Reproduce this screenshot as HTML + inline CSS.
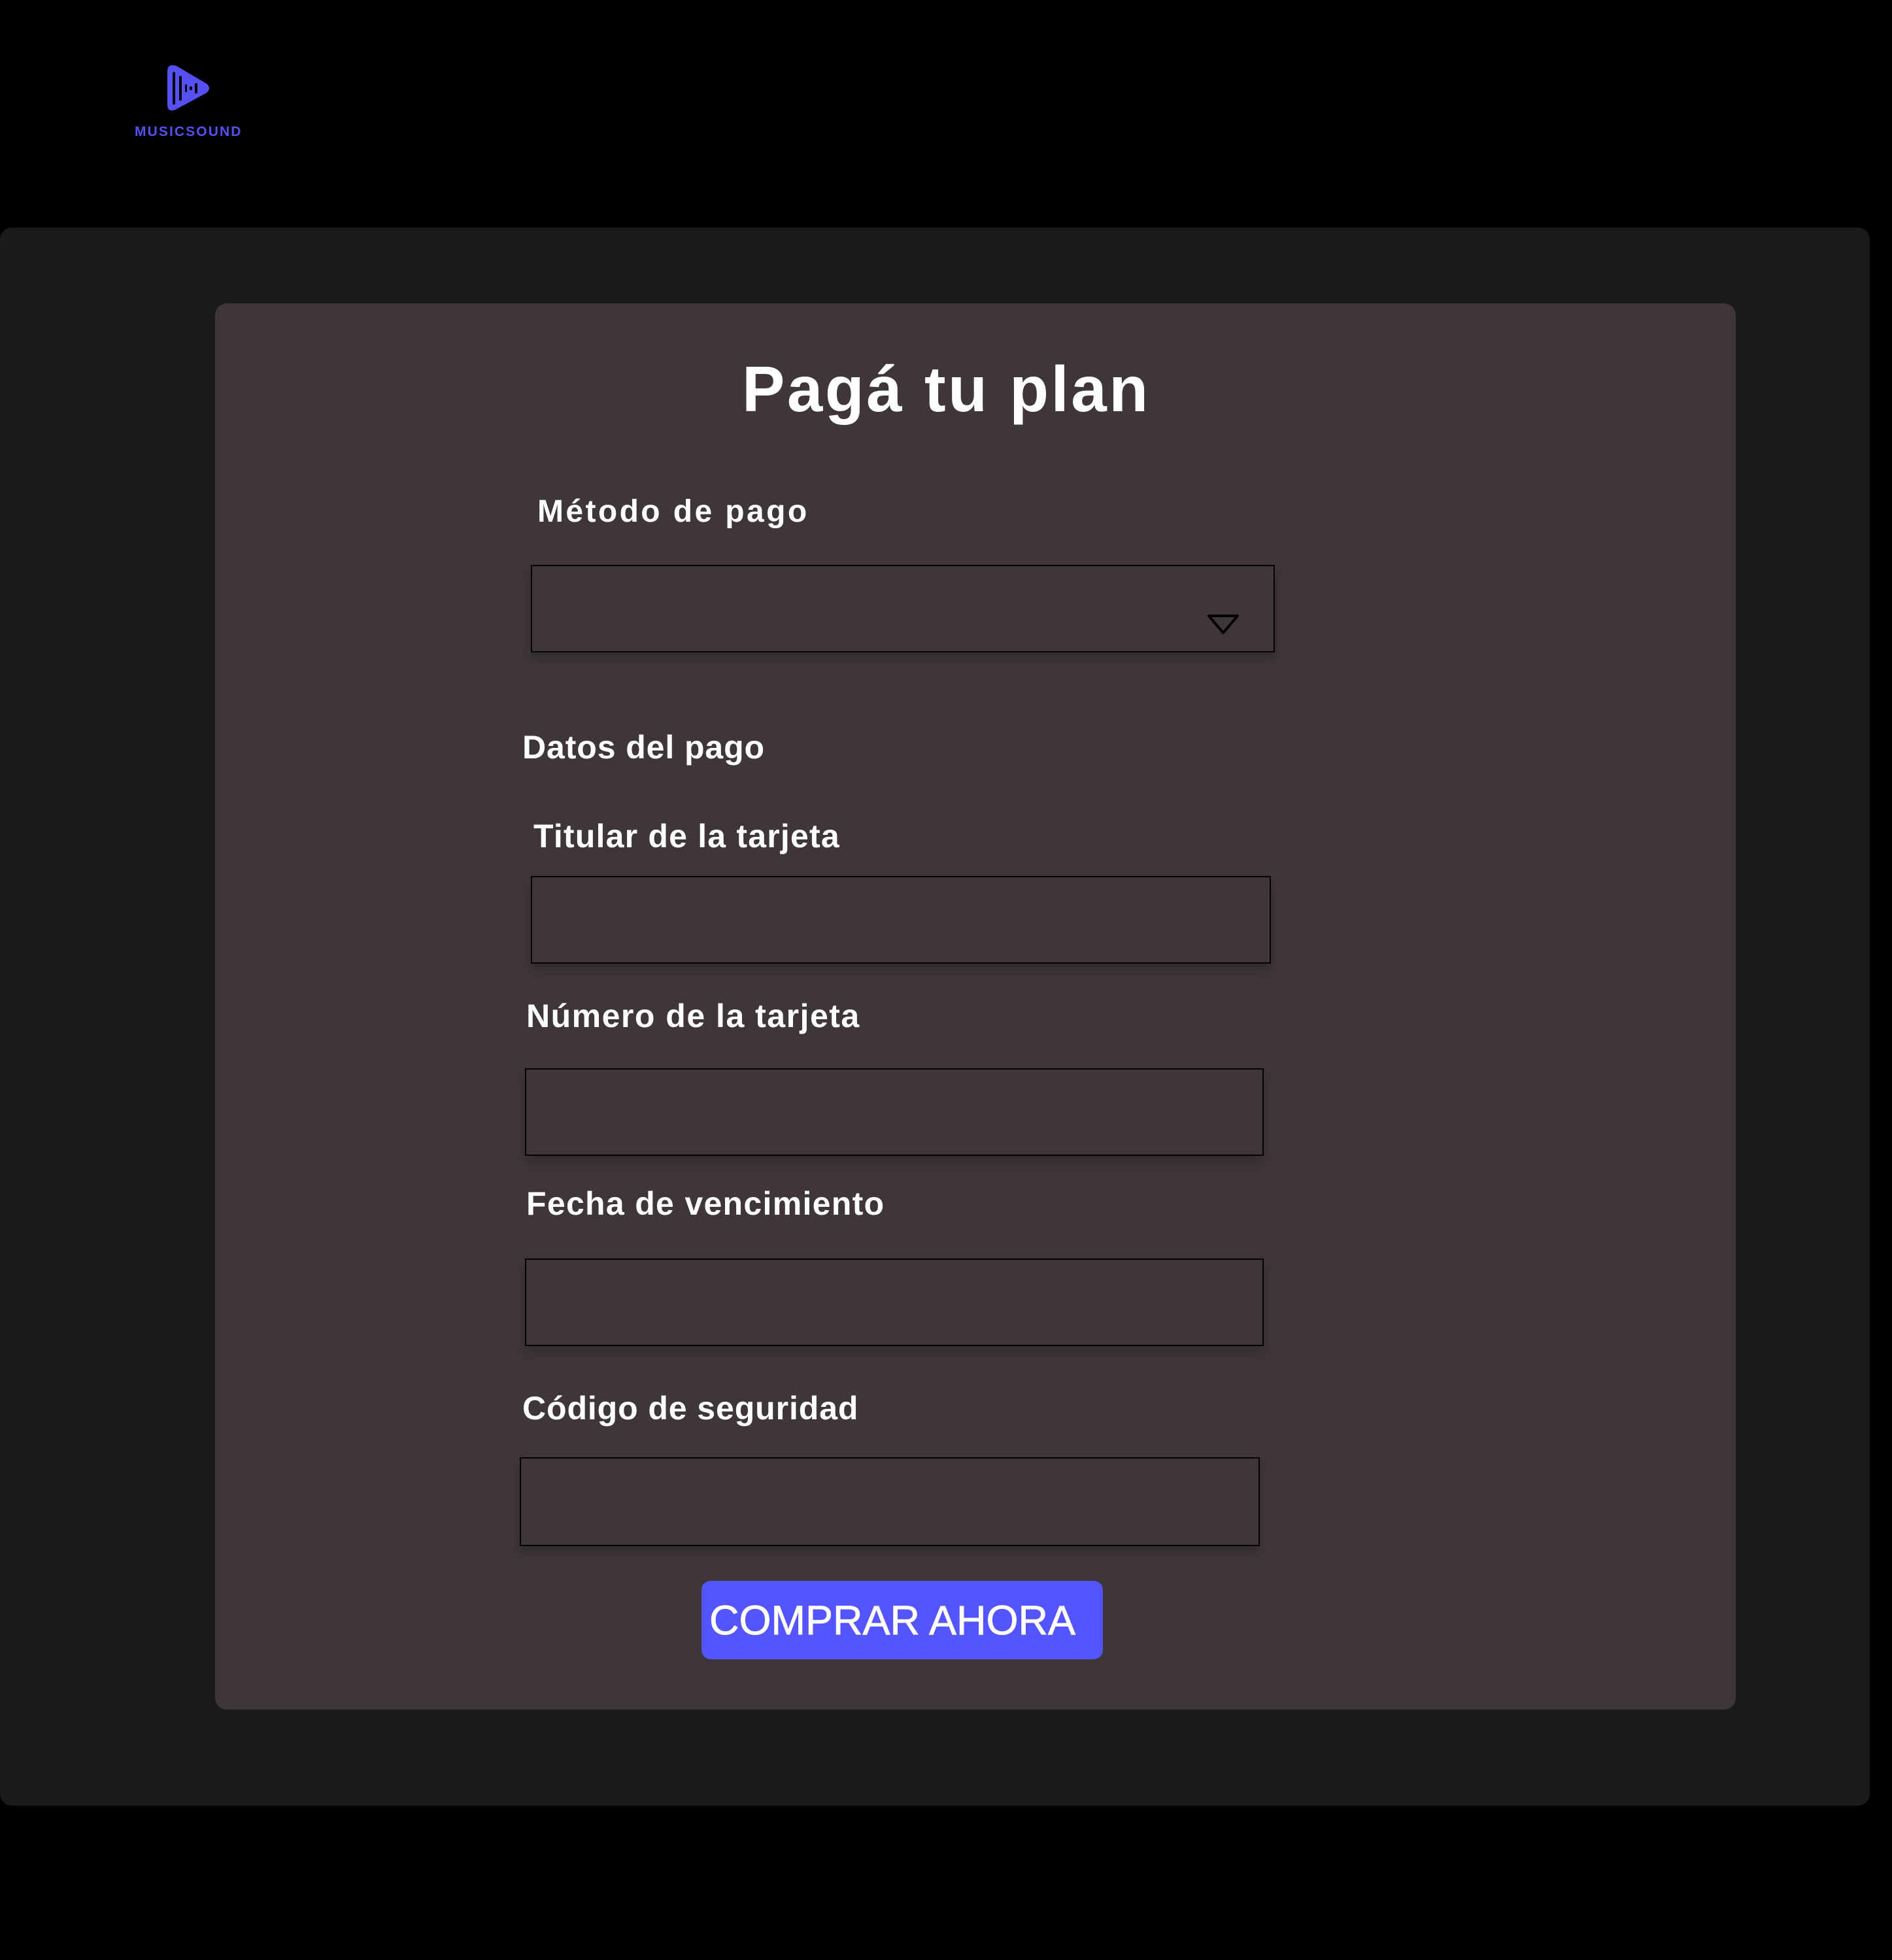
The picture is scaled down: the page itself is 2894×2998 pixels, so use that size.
<!DOCTYPE html>
<html><head><meta charset="utf-8"><style>
*{margin:0;padding:0;box-sizing:border-box}
body{width:2894px;height:2998px;background:#000;position:relative;overflow:hidden;font-family:"Liberation Sans",sans-serif;color:#fff}
.a{position:absolute;white-space:nowrap}
.outer{position:absolute;left:0;top:348px;width:2860px;height:2414px;background:#1a1a1a;border-radius:18px}
.card{position:absolute;left:329px;top:464px;width:2326px;height:2151px;background:#3e3637;border-radius:18px}
.inp{position:absolute;border:2px solid #000;background:#3e3637;box-shadow:0 10px 14px rgba(0,0,0,0.18)}
.lb{font-weight:bold;font-size:50px;line-height:50px;letter-spacing:1.2px}
</style></head><body>
<svg class="a" style="left:252px;top:96px" width="72" height="78" viewBox="0 0 72 78">
<path d="M14 4 Q4 2 4 14 L4 64 Q4 76 16 72 L64 46 Q72 39 64 32 L20 6 Q17 4 14 4 Z" fill="#5650f0"/>
<rect x="12" y="14" width="4" height="50" rx="2" fill="#000"/>
<rect x="22" y="20" width="4" height="38" rx="2" fill="#000"/>
<rect x="31" y="33" width="3" height="12" rx="1.5" fill="#000"/>
<rect x="38" y="36" width="4" height="6" rx="2" fill="#000"/>
<rect x="46" y="31" width="4" height="16" rx="2" fill="#000"/>
</svg>
<div class="a" style="left:206px;top:190px;font-size:21px;line-height:24px;font-weight:bold;color:#5650f0;letter-spacing:2.1px">MUSICSOUND</div>
<div class="outer"></div>
<div class="card"></div>
<div class="a" style="left:1135px;top:545px;font-size:98px;line-height:100px;font-weight:bold;letter-spacing:3.5px">Pagá tu plan</div>
<div class="a" style="left:822px;top:758px;font-size:48px;line-height:50px;font-weight:bold;letter-spacing:3.4px">Método de pago</div>
<div class="inp" style="left:812px;top:864px;width:1138px;height:134px"></div>
<svg class="a" style="left:1846px;top:938px" width="50" height="34" viewBox="0 0 50 34"><path d="M3 4 L47 4 L25 30 Z" fill="none" stroke="#000" stroke-width="4" stroke-linejoin="round"/></svg>
<div class="a lb" style="left:799px;top:1118px;letter-spacing:0.9px">Datos del pago</div>
<div class="a lb" style="left:816px;top:1254px">Titular de la tarjeta</div>
<div class="inp" style="left:812px;top:1340px;width:1132px;height:134px"></div>
<div class="a lb" style="left:805px;top:1529px;letter-spacing:1.5px">Número de la tarjeta</div>
<div class="inp" style="left:803px;top:1634px;width:1130px;height:134px"></div>
<div class="a lb" style="left:805px;top:1816px;letter-spacing:1.3px">Fecha de vencimiento</div>
<div class="inp" style="left:803px;top:1925px;width:1130px;height:134px"></div>
<div class="a lb" style="left:799px;top:2129px;letter-spacing:0.9px">Código de seguridad</div>
<div class="inp" style="left:795px;top:2229px;width:1132px;height:136px"></div>
<div class="a" style="left:1073px;top:2418px;width:614px;height:120px;background:#5555ff;border-radius:14px"></div>
<div class="a" style="left:1085px;top:2447px;font-size:63px;line-height:64px;color:#fff;-webkit-text-stroke:0.8px #fff">COMPRAR AHORA</div>
</body></html>
